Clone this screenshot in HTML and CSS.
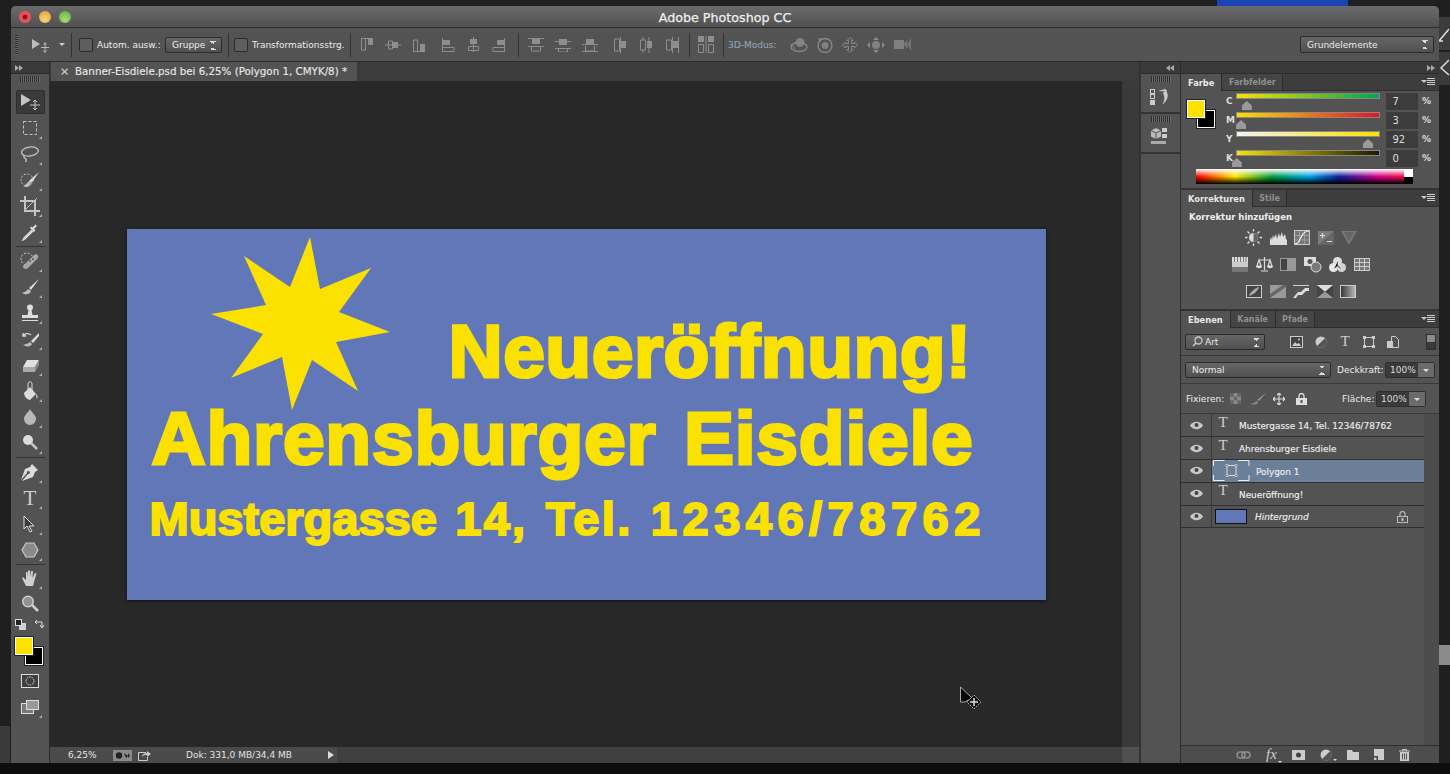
FILE: index.html
```html
<!DOCTYPE html>
<html>
<head>
<meta charset="utf-8">
<title>Adobe Photoshop CC</title>
<link rel="stylesheet" href="styles.css">
</head>
<body>
<!-- bits of the desktop behind the window -->
<div class="desk-blue"></div>
<div class="desk-right one"><svg width="10" height="30" viewBox="0 0 10 30"><path d="M0 24L10 12M0 24h4" fill="none" stroke="#ddd" stroke-width="1.5"/></svg></div>
<div class="desk-right two"><svg width="10" height="30" viewBox="0 0 10 30"><path d="M10 8L2 16l8 7" fill="none" stroke="#ddd" stroke-width="1.5"/></svg></div>
<div class="desk-right three"></div>
<div class="desk-left"></div>
<div class="desk-bottom"></div>

<div class="window">
  <div class="titlebar">
    <div class="lights"><i class="red"></i><i class="yellow"></i><i class="green"></i></div>
    <span class="title">Adobe Photoshop CC</span>
  </div>

  <div class="optionsbar">
    <div class="grip-v"></div>
    <svg class="opt-move" width="20" height="16" viewBox="0 0 20 16"><path d="M1 2l8 5-8 5z" fill="#bdbdbd"/><path d="M14 6v9M10 10.500h8M12.500 7.500l1.500-2 1.500 2M12.500 13.500l1.500 2 1.500-2" fill="none" stroke="#bbb"/></svg>
    <i class="caret opt-caret"></i>
    <span class="sep first"></span>
    <span class="check"></span>
    <span class="opt-label auto">Autom. ausw.:</span>
    <span class="select gruppe">Gruppe<i class="updown"></i></span>
    <span class="sep s2"></span>
    <span class="check"></span>
    <span class="opt-label trans">Transformationsstrg.</span>
    <span class="sep s3"></span>

    <div class="aligns a1">
      <svg width="14" height="14" viewBox="0 0 14 14"><path d="M1 .5h12M1.500 1v11h4V1" fill="none" stroke="#8e8e8e"/><rect x="8" y="1" width="5" height="6" fill="#8e8e8e"/></svg>
      <svg width="16" height="14" viewBox="0 0 16 14"><path d="M0 7h16M3.500 3v8h4V3z" fill="none" stroke="#8e8e8e"/><rect x="8" y="4" width="5" height="6" fill="#8e8e8e"/></svg>
      <svg width="14" height="14" viewBox="0 0 14 14"><path d="M1 13.500h12M1.500 13V2h4v11" fill="none" stroke="#8e8e8e"/><rect x="8" y="6" width="5" height="7" fill="#8e8e8e"/></svg>
      <svg class="wide" width="13" height="14" viewBox="0 0 13 14"><path d="M.5 0v14M1 9.500h11v4H1" fill="none" stroke="#8e8e8e"/><rect x="1" y="2" width="7" height="5" fill="#8e8e8e"/></svg>
      <svg width="15" height="15" viewBox="0 0 15 15"><path d="M7.500 0v15M2.500 9.500h10v4h-10z" fill="none" stroke="#8e8e8e"/><rect x="4" y="2" width="7" height="5" fill="#8e8e8e"/></svg>
      <svg class="last" width="13" height="14" viewBox="0 0 13 14"><path d="M12.500 0v14M12 9.500H1v4h11" fill="none" stroke="#8e8e8e"/><rect x="5" y="2" width="7" height="5" fill="#8e8e8e"/></svg>
    </div>
    <span class="sep s4"></span>
    <div class="aligns a2">
      <svg width="16" height="14" viewBox="0 0 16 14"><path d="M0 .5h16M0 8.500h16M3.500 9v4h9V9" fill="none" stroke="#8e8e8e"/><rect x="4" y="1" width="8" height="5" fill="#8e8e8e"/></svg>
      <svg width="16" height="14" viewBox="0 0 16 14"><path d="M0 3.500h16M0 10.500h16M3.500 11v3h9v-3" fill="none" stroke="#8e8e8e"/><rect x="4" y="1" width="8" height="6" fill="#8e8e8e"/></svg>
      <svg width="16" height="14" viewBox="0 0 16 14"><path d="M0 6.500h16M0 13.500h16M3.500 8v5h9V8" fill="none" stroke="#8e8e8e"/><rect x="4" y="1" width="8" height="5" fill="#8e8e8e"/></svg>
      <svg class="wide" width="13" height="16" viewBox="0 0 13 16"><path d="M.5 2h5v12h-5zM6.500 0v16" fill="none" stroke="#8e8e8e"/><rect x="7" y="4" width="5" height="7" fill="#8e8e8e"/></svg>
      <svg class="wide2" width="13" height="16" viewBox="0 0 13 16"><path d="M.5 3h5v10h-5zM3 0v3M3 13v3M9 0v16" fill="none" stroke="#8e8e8e"/><rect x="7" y="4" width="5" height="7" fill="#8e8e8e"/></svg>
      <svg class="wide2" width="13" height="16" viewBox="0 0 13 16"><path d="M.5 3h5v10h-5zM6.500 0v16M12.500 0v16" fill="none" stroke="#8e8e8e"/><rect x="7" y="4" width="5" height="7" fill="#8e8e8e"/></svg>
    </div>
    <span class="sep s5"></span>
    <svg class="dist" width="16" height="17" viewBox="0 0 16 17"><rect x="0" y="0" width="6" height="6" fill="#8e8e8e"/><rect x="10" y="0" width="6" height="6" fill="#8e8e8e"/><path d="M.5 8.500h5v8h-5zM10.500 8.500h5v8h-5zM8 0v17" fill="none" stroke="#8e8e8e"/></svg>
    <span class="sep s6"></span>
    <span class="mode-label">3D-Modus:</span>
    <div class="modes">
      <svg width="18" height="16" viewBox="0 0 18 16"><circle cx="10" cy="5.500" r="4.500" fill="#808080"/><ellipse cx="9" cy="10" rx="8" ry="4.500" fill="none" stroke="#8a8a8a" stroke-width="1.300"/><path d="M1 7l4 5" stroke="#8a8a8a"/></svg>
      <svg width="16" height="16" viewBox="0 0 16 16"><circle cx="8" cy="8.500" r="7" fill="none" stroke="#8a8a8a" stroke-width="1.300"/><circle cx="8" cy="8.500" r="3.500" fill="#808080"/><path d="M1 1l4 1-2 3z" fill="#8a8a8a"/></svg>
      <svg width="16" height="16" viewBox="0 0 16 16"><path d="M8 .5l3 3H9.500v3h3V5l3 3-3 3V9.500h-3v3H11l-3 3-3-3h1.500v-3h-3V11l-3-3 3-3v1.500h3v-3H5z" fill="none" stroke="#8a8a8a"/></svg>
      <svg width="18" height="16" viewBox="0 0 18 16"><circle cx="9" cy="8" r="4" fill="#808080"/><path d="M9 0l3 3H6zM9 16l3-3H6zM0 8l3-3v6zM18 8l-3-3v6z" fill="#8a8a8a"/></svg>
      <svg width="18" height="12" viewBox="0 0 18 12"><rect x="0" y="1" width="10" height="9" fill="#808080"/><path d="M10 5l3-3v7zM17 0l-3 5.500 3 5.500" fill="#8a8a8a" stroke="#8a8a8a" stroke-width=".5" fill-opacity=".6"/></svg>
    </div>
    <span class="select workspace">Grundelemente<i class="updown"></i></span>
  </div>

  <div class="main">
    <!-- tool column -->
    <div class="tools">
      <div class="collapse-row left"><i class="tri-r"></i><i class="tri-r"></i></div>
      <div class="grip-h"></div>
      <div class="tool active"><svg width="24" height="20" viewBox="0 0 24 20"><path d="M3 2l10 6-10 6z" fill="#c4c4c4"/><path d="M17 8v10M12 13h10M15 10l2-2 2 2M15 16l2 2 2-2" fill="none" stroke="#c4c4c4"/></svg></div>
      <div class="tool more"><svg width="18" height="18" viewBox="0 0 18 18"><rect x="2.500" y="2.500" width="13" height="13" fill="none" stroke="#c4c4c4" stroke-dasharray="3 2"/></svg></div>
      <div class="tool more"><svg width="20" height="18" viewBox="0 0 20 18"><ellipse cx="10" cy="6.500" rx="8.500" ry="4.500" fill="none" stroke="#c4c4c4" stroke-width="1.300" transform="rotate(-8 10 7)"/><path d="M4 10c-1 3 1 3 2 4s0 2-.5 3" fill="none" stroke="#c4c4c4" stroke-width="1.300"/></svg></div>
      <div class="tool more"><svg width="20" height="18" viewBox="0 0 20 18"><circle cx="7" cy="9" r="6" fill="none" stroke="#c4c4c4" stroke-dasharray="2 1.500"/><path d="M19 1l-8 7-2 2 2 2 2-2z" fill="#dcdcdc"/><path d="M9 10l-3 3c-1 1-2 2-3 2 3 2 7 1 8-3z" fill="#bdbdbd"/></svg></div>
      <div class="tool more"><svg width="20" height="20" viewBox="0 0 20 20"><path d="M5 0v15h15M0 5h15v15" fill="none" stroke="#c4c4c4" stroke-width="2"/><path d="M17 2L5 14" stroke="#c4c4c4"/></svg></div>
      <div class="tool more"><svg width="18" height="18" viewBox="0 0 18 18"><path d="M11 7L3 15l-1 2 2-1 8-8" fill="none" stroke="#dcdcdc" stroke-width="1.300"/><path d="M9 5l4 4 1.500-1.500L13 6l3-3-1.500-1.500-3 3-1-1z" fill="#dcdcdc"/></svg></div>
      <div class="divider"></div>
      <div class="tool more"><svg width="20" height="18" viewBox="0 0 20 18"><circle cx="7" cy="7" r="6" fill="none" stroke="#c4c4c4" stroke-dasharray="2 1.500"/><path d="M3 14L14 3c2-2 5 0 4 3L8 16c-2 2-6 0-5-2z" fill="#a8a8a8"/><circle cx="10" cy="9" r="1" fill="#555"/><circle cx="13" cy="7" r="1" fill="#555"/></svg></div>
      <div class="tool more"><svg width="20" height="18" viewBox="0 0 20 18"><path d="M19 1L9 10l2 2z" fill="#dcdcdc"/><path d="M8 11c-2 3-4 3-6 4 3 2 8 2 9-2z" fill="#bdbdbd"/></svg></div>
      <div class="tool more"><svg width="20" height="18" viewBox="0 0 20 18"><circle cx="10" cy="3.500" r="3" fill="#dcdcdc"/><path d="M8.500 6h3l1 5H18v3H2v-3h5.500z" fill="#dcdcdc"/><path d="M2 16.500h16" stroke="#dcdcdc"/></svg></div>
      <div class="tool more"><svg width="20" height="18" viewBox="0 0 20 18"><path d="M19 3l-8 8 2 2 6-7z" fill="#dcdcdc"/><path d="M10 12c-2 2-5 2-7 3 3 2 8 2 9-1z" fill="#bdbdbd"/><path d="M3 6c2-3 6-3 8-1M3 3v3h3" fill="none" stroke="#dcdcdc" stroke-width="1.300"/></svg></div>
      <div class="tool more"><svg width="20" height="16" viewBox="0 0 20 16"><path d="M7 3h12l-4 7H3z" fill="#e0e0e0"/><path d="M3 10h12v5H3z" fill="#a8a8a8"/><path d="M15 10l4-7v5l-4 7z" fill="#8a8a8a"/></svg></div>
      <div class="tool more"><svg width="18" height="20" viewBox="0 0 18 20"><path d="M3 12l6-6 6 7-6 6c-3 0-6-4-6-7z" fill="#dcdcdc"/><path d="M7 10V3c0-3 4-3 4 0v7" fill="none" stroke="#dcdcdc"/><path d="M15 13c2 1 2 4 1 5-1-1-1-3-1-5z" fill="#bdbdbd"/></svg></div>
      <div class="tool more"><svg width="16" height="18" viewBox="0 0 16 18"><path d="M8 1c2 4 6 6 6 10a6 6 0 0 1-12 0C2 7 6 5 8 1z" fill="#b8b8b8"/></svg></div>
      <div class="tool more"><svg width="18" height="18" viewBox="0 0 18 18"><circle cx="7" cy="6" r="5" fill="#dcdcdc"/><path d="M10 9l6 6" stroke="#c4c4c4" stroke-width="2.500"/></svg></div>
      <div class="divider"></div>
      <div class="tool more"><svg width="18" height="18" viewBox="0 0 18 18"><path d="M11 1l6 6-3 2-2 5-11 4 6-7a1.500 1.500 0 1 0-1-1l-6 7 4-11 5-2z" fill="#dcdcdc"/></svg></div>
      <div class="tool more"><span class="t-glyph">T</span></div>
      <div class="tool more"><svg width="16" height="18" viewBox="0 0 16 18"><path d="M2 1v13l3-3 3 6 2-1-3-5h5z" fill="#3b3b3b" stroke="#dcdcdc"/></svg></div>
      <div class="tool more"><svg width="18" height="16" viewBox="0 0 18 16"><path d="M5 1h8l4 7-4 7H5L1 8z" fill="#8a8a8a" stroke="#c8c8c8" stroke-width="1.200"/></svg></div>
      <div class="divider tight"></div>
      <div class="tool more"><svg width="18" height="18" viewBox="0 0 18 18"><path d="M5 17L1 9l1-1 3 3V3h1.500l.5 5V1.500h2L9 8l1-6h2l-.5 7 2.500-5 1.500.5L13 13l-1 4z" fill="#cfcfcf"/></svg></div>
      <div class="tool"><svg width="18" height="18" viewBox="0 0 18 18"><circle cx="7" cy="6.500" r="5.200" fill="#909090" stroke="#cfcfcf" stroke-width="1.500"/><path d="M11 10l6 6" stroke="#cfcfcf" stroke-width="2.500"/></svg></div>
      <div class="colorswitch">
        <svg width="11" height="11" viewBox="0 0 11 11"><rect x="4" y="4" width="7" height="7" fill="#cfcfcf"/><rect x=".5" y=".5" width="6" height="6" fill="#222" stroke="#ddd"/></svg>
        <svg width="11" height="11" viewBox="0 0 11 11"><path d="M1 3h7v5M6 6l2 3 2-3M3 1L1 3l2 2" fill="none" stroke="#ddd"/></svg>
      </div>
      <div class="swatches tool-swatches"><i class="bg"></i><i class="fg"></i></div>
      <div class="tool qmask"><svg width="18" height="14" viewBox="0 0 18 14"><rect width="18" height="14" fill="#dcdcdc"/><rect x="1" y="1" width="16" height="12" fill="#3f3f3f"/><circle cx="9" cy="7" r="4" fill="none" stroke="#ddd" stroke-dasharray="1.500 1"/></svg></div>
      <div class="tool more screen"><svg width="18" height="14" viewBox="0 0 18 14"><rect x=".5" y="3.500" width="12" height="10" fill="#777" stroke="#ddd"/><rect x="5.500" y=".5" width="12" height="9" fill="#999" stroke="#ddd"/></svg></div>
    </div>

    <!-- document -->
    <div class="doc">
      <div class="tabrow">
        <div class="doctab"><span class="tab-x">×</span>Banner-Eisdiele.psd bei 6,25% (Polygon 1, CMYK/8) *</div>
      </div>
      <div class="docbody">
        <div class="canvas">
          <div class="banner">
            <svg class="star" width="919" height="371" viewBox="127 229 919 371"><polygon fill="#fae100" points="310,237 320,289 371,268 339,312 390,332 336,342 358,391 312,360 292,410 282,357 231,378 263,334 211,314 266,305 244,256 290,287"/></svg>
            <div class="art neu">Neueröffnung!</div>
            <div class="art ahr">Ahrensburger Eisdiele</div>
            <div class="art mus"><span class="tight">Mustergasse</span> 14, Tel. <span class="digits">12346/78762</span></div>
          </div>
          <svg class="cursor" width="30" height="28" viewBox="0 0 30 28"><path d="M1.500 1v15H6l7-4z" fill="#000" stroke="#aaa"/><path d="M15 9l7 7-7 7-7-7z" fill="#111" stroke="#aaa" stroke-dasharray="2 1"/><path d="M15 12v8M11 16h8" stroke="#ddd" stroke-width="1.500"/></svg>
        </div>
        <div class="vscroll"></div>
      </div>
      <div class="statusrow">
        <div class="status">
          <span class="zoomval">6,25%</span>
          <svg class="st-a" width="19" height="11" viewBox="0 0 19 11"><rect width="19" height="11" fill="#8a8a8a"/><circle cx="6" cy="5.500" r="3.200" fill="#222"/><path d="M11 3l4 3-2 2zM15 3l2 3-2 2" fill="#222"/></svg>
          <svg class="st-b" width="13" height="11" viewBox="0 0 13 11"><path d="M8 2.500H.5v8h9V7" fill="none" stroke="#ccc"/><path d="M4 7c0-3 3-4 5-4V1l4 3-4 3V5C7 5 5 5 4 7z" fill="#ccc"/></svg>
          <span class="docsize">Dok: 331,0 MB/34,4 MB</span>
          <i class="st-arrow"></i>
        </div>
        <div class="hscroll"></div>
        <div class="corner"></div>
      </div>
    </div>

    <!-- icon dock -->
    <div class="dock">
      <div class="collapse-row dockhead"><i class="tri-l"></i><i class="tri-l"></i></div>
      <div class="dockgroup">
        <div class="grip-h"></div>
        <svg width="24" height="17" viewBox="0 0 24 17"><rect x="1.500" y="1.500" width="4" height="4" fill="none" stroke="#ccc"/><rect x="1.500" y="6.500" width="4" height="4" fill="none" stroke="#ccc"/><rect x="1" y="12" width="5" height="5" fill="#ccc"/><path d="M10 3h8l-2-2M17 3c3 5 1 9-3 13 2-4 2-9 0-11z" fill="#ccc" stroke="#ccc" stroke-width=".5"/></svg>
      </div>
      <div class="dockgroup">
        <div class="grip-h"></div>
        <svg width="20" height="17" viewBox="0 0 20 17"><path d="M5 0l5 2.500v6L5 11 0 8.500v-6z" fill="#bbb"/><path d="M5 5v6M0 2.500l5 2.500 5-2.500" stroke="#555" fill="none"/><rect x="11" y="0" width="5" height="4" fill="#ccc"/><rect x="11" y="6" width="5" height="4" fill="#ccc"/><rect x="0" y="13" width="15" height="3" fill="#aaa"/></svg>
      </div>
    </div>

    <!-- panels -->
    <div class="panels">
      <div class="collapse-row panelhead"><i class="tri-r"></i><i class="tri-r"></i></div>

      <section class="group color">
        <div class="tabs"><span class="tab on">Farbe</span><span class="tab">Farbfelder</span><i class="menu"></i></div>
        <div class="color-body">
          <div class="swatches panel-swatches"><i class="bg"></i><i class="fg"></i></div>
          <div class="sliders">
            <div class="slider"><b>C</b><span class="track"><i class="fill c"></i><i class="thumb" style="left:7%"></i></span><span class="val">7</span><b class="pct">%</b></div>
            <div class="slider"><b>M</b><span class="track"><i class="fill m"></i><i class="thumb" style="left:3%"></i></span><span class="val">3</span><b class="pct">%</b></div>
            <div class="slider"><b>Y</b><span class="track"><i class="fill y"></i><i class="thumb" style="left:92%"></i></span><span class="val">92</span><b class="pct">%</b></div>
            <div class="slider"><b>K</b><span class="track"><i class="fill k"></i><i class="thumb" style="left:0%"></i></span><span class="val">0</span><b class="pct">%</b></div>
          </div>
        </div>
        <div class="spectrum"><span class="bw"></span></div>
      </section>

      <section class="group adjust">
        <div class="tabs"><span class="tab on">Korrekturen</span><span class="tab">Stile</span><i class="menu"></i></div>
        <div class="adj-title">Korrektur hinzufügen</div>
        <div class="adj-row">
          <svg width="17" height="17" viewBox="0 0 17 17"><circle cx="8.500" cy="8.500" r="4.500" fill="#ddd"/><path d="M8.500 4a4.500 4.500 0 0 1 0 9z" fill="#666"/><path d="M8.500 0v2.500M8.500 14.500V17M0 8.500h2.500M14.500 8.500H17M2.500 2.500l2 2M12.500 12.500l2 2M2.500 14.500l2-2M12.500 4.500l2-2" stroke="#ddd" stroke-width="1.300"/></svg>
          <svg width="17" height="14" viewBox="0 0 17 14"><path d="M0 14V9l1-3 1 3 1-5 1 3 2-4 1 5 2-6 1 4 2-5 1 5 2-3 1 5 1 1v5z" fill="#ddd"/></svg>
          <svg width="16" height="15" viewBox="0 0 16 15"><rect x=".5" y=".5" width="15" height="14" fill="#777" stroke="#ccc"/><path d="M5.500 1v13M10.500 1v13M1 5.500h14M1 10h14" stroke="#aaa" stroke-width=".7"/><path d="M1 14c6 0 5-13 14-13" fill="none" stroke="#eee" stroke-width="1.200"/></svg>
          <svg width="16" height="14" viewBox="0 0 16 14"><rect width="16" height="14" fill="#7c7c7c"/><path d="M0 14L16 0v14z" fill="#666"/><path d="M2 4.500h5M4.500 2v5M9 10.500h5" stroke="#ddd" stroke-width="1.200"/></svg>
          <svg width="16" height="14" viewBox="0 0 16 14"><path d="M0 0h16L8 14z" fill="#777"/><path d="M3 1h10L8 10z" fill="#666"/></svg>
        </div>
        <div class="adj-row">
          <svg width="16" height="15" viewBox="0 0 16 15"><rect width="16" height="5" fill="#ddd"/><path d="M2.500 0v5M5.500 0v5M8.500 0v5M11.500 0v5M14 0v5" stroke="#777"/><rect y="5" width="16" height="5" fill="#ccc"/><rect y="10" width="16" height="5" fill="#777"/></svg>
          <svg width="17" height="15" viewBox="0 0 17 15"><path d="M8.500 0v13M3 3h11M1 9l2-6 2 6zM12 9l2-6 2 6zM5 14h7" fill="none" stroke="#ddd" stroke-width="1.200"/><path d="M0 9h6c0 3-6 3-6 0zM11 9h6c0 3-6 3-6 0z" fill="#ddd"/></svg>
          <svg width="16" height="13" viewBox="0 0 16 13"><rect width="16" height="13" fill="#999"/><rect x="1" y="1" width="6" height="11" fill="#444"/></svg>
          <svg width="18" height="17" viewBox="0 0 18 17"><rect y="1" width="12" height="9" fill="#ddd"/><circle cx="6" cy="5.500" r="2.500" fill="#555"/><circle cx="12" cy="11" r="5" fill="#777" stroke="#ddd"/></svg>
          <svg width="17" height="15" viewBox="0 0 17 15"><circle cx="8.500" cy="4.500" r="4.500" fill="#ddd"/><circle cx="4.500" cy="10.500" r="4.500" fill="#e8e8e8"/><circle cx="12.500" cy="10.500" r="4.500" fill="#d2d2d2"/><path d="M8.500 5v4l-3 2M8.500 9l3 2" stroke="#555"/></svg>
          <svg width="16" height="13" viewBox="0 0 16 13"><rect x=".5" y=".5" width="15" height="12" fill="#777" stroke="#ccc"/><path d="M5.500 1v11M10.500 1v11M1 4.500h14M1 8.500h14" stroke="#ccc"/></svg>
        </div>
        <div class="adj-row">
          <svg width="16" height="13" viewBox="0 0 16 13"><rect x=".5" y=".5" width="15" height="12" fill="#444" stroke="#ccc"/><path d="M3 11c1-4 6-8 10-9-1 4-6 8-10 9z" fill="#aaa"/></svg>
          <svg width="16" height="13" viewBox="0 0 16 13"><rect width="16" height="13" fill="#999"/><path d="M0 13L16 2V0H13L0 9z" fill="#666"/></svg>
          <svg width="16" height="13" viewBox="0 0 16 13"><rect width="16" height="13" fill="#555"/><path d="M0 13l5-6h3l4-4h4v3h-3l-4 4H5l-2 3z" fill="#ddd"/><path d="M0 0h16v1H0z" fill="#ccc"/></svg>
          <svg width="16" height="13" viewBox="0 0 16 13"><rect width="16" height="13" fill="#999"/><path d="M0 0l8 6.500L0 13zM16 0L8 6.500 16 13z" fill="#444"/><path d="M0 0h16L8 6.500z" fill="#ddd"/></svg>
          <svg width="16" height="13" viewBox="0 0 16 13"><defs><linearGradient id="gradmap"><stop offset="0" stop-color="#333"/><stop offset="1" stop-color="#bbb"/></linearGradient></defs><rect x=".5" y=".5" width="15" height="12" fill="url(#gradmap)" stroke="#ccc"/></svg>
        </div>
      </section>

      <section class="group layers">
        <div class="tabs"><span class="tab on">Ebenen</span><span class="tab">Kanäle</span><span class="tab">Pfade</span><i class="menu"></i></div>
        <div class="layer-bar filter">
          <span class="select art-sel"><svg width="11" height="11" viewBox="0 0 11 11"><circle cx="6.500" cy="4.500" r="3.500" fill="none" stroke="#ccc" stroke-width="1.300"/><path d="M4 7L1 10" stroke="#ccc" stroke-width="1.500"/></svg>Art<i class="updown"></i></span>
          <div class="filter-icons">
            <svg width="13" height="12" viewBox="0 0 13 12"><rect x=".5" y=".5" width="12" height="11" fill="#444" stroke="#ccc"/><path d="M2 10l3-4 2 2 2-1 2 3z" fill="#ccc"/><circle cx="9" cy="3.500" r="1" fill="#ccc"/></svg>
            <svg width="12" height="12" viewBox="0 0 12 12"><circle cx="6" cy="6" r="5.500" fill="#ccc"/><path d="M10 2.200A5.500 5.500 0 0 1 2 10z" fill="#555"/></svg>
            <span class="t-glyph small">T</span>
            <svg width="12" height="12" viewBox="0 0 12 12"><rect x="1.500" y="1.500" width="9" height="9" fill="none" stroke="#ccc"/><path d="M0 0h3v3H0zM9 0h3v3H9zM0 9h3v3H0zM9 9h3v3H9z" fill="#ccc"/></svg>
            <svg width="12" height="12" viewBox="0 0 12 12"><path d="M4.500.5h4l3 3v8h-7z" fill="none" stroke="#ccc"/><rect x="0" y="5" width="6" height="7" fill="#ccc"/></svg>
          </div>
          <span class="toggle"><i></i></span>
        </div>
        <div class="layer-bar blend">
          <span class="select normal">Normal<i class="updown"></i></span>
          <span class="field-label">Deckkraft:</span>
          <span class="num">100%<i class="numbtn"></i></span>
        </div>
        <div class="layer-bar lock">
          <span class="field-label fix">Fixieren:</span>
          <svg class="lk checker" width="11" height="11" viewBox="0 0 11 11"><rect width="11" height="11" fill="#8a8a8a"/><path d="M0 0h3.700v3.700H0zM7.300 0H11v3.700H7.300zM3.700 3.700h3.600v3.600H3.700zM0 7.300h3.700V11H0zM7.300 7.300H11V11H7.300z" fill="#666"/></svg>
          <svg class="lk brush" width="16" height="12" viewBox="0 0 16 12"><path d="M16 0L7 7l2 1z" fill="#999"/><path d="M6 8c-1 2-3 2-6 3 3 1 8 1 8-2z" fill="#888"/></svg>
          <svg class="lk moved" width="12" height="12" viewBox="0 0 12 12"><path d="M6 0v12M0 6h12M4 2l2-2 2 2M4 10l2 2 2-2M2 4L0 6l2 2M10 4l2 2-2 2" fill="none" stroke="#ddd" stroke-width="1.100"/></svg>
          <svg class="lk" width="11" height="12" viewBox="0 0 11 12"><path d="M3 5V3a2.500 2.500 0 0 1 5 0v2" fill="none" stroke="#ddd" stroke-width="1.300"/><rect y="5" width="11" height="7" fill="#ddd"/><rect x="4.500" y="7" width="2" height="3" fill="#555"/></svg>
          <span class="field-label area">Fläche:</span>
          <span class="num">100%<i class="numbtn"></i></span>
        </div>
        <div class="layer-body">
          <div class="layer-list">
            <div class="layer"><span class="eye"><svg width="13" height="9" viewBox="0 0 13 9"><path d="M0 4.500C3-.5 10-.5 13 4.500 10 9.500 3 9.500 0 4.500z" fill="#c8c8c8"/><circle cx="6.500" cy="4" r="2" fill="#444"/></svg></span><span class="thumb-t t-glyph small">T</span><span class="lname">Mustergasse 14, Tel. 12346/78762</span></div>
            <div class="layer"><span class="eye"><svg width="13" height="9" viewBox="0 0 13 9"><path d="M0 4.500C3-.5 10-.5 13 4.500 10 9.500 3 9.500 0 4.500z" fill="#c8c8c8"/><circle cx="6.500" cy="4" r="2" fill="#444"/></svg></span><span class="thumb-t t-glyph small">T</span><span class="lname">Ahrensburger Eisdiele</span></div>
            <div class="layer sel short"><span class="eye"><svg width="13" height="9" viewBox="0 0 13 9"><path d="M0 4.500C3-.5 10-.5 13 4.500 10 9.500 3 9.500 0 4.500z" fill="#c8c8c8"/><circle cx="6.500" cy="4" r="2" fill="#444"/></svg></span>
              <svg class="shape-thumb" width="37" height="21" viewBox="0 0 37 21"><path d="M.5 6V.5h11M25 .5h11V6M.5 15v5.500h11M25 20.500h11V15" fill="none" stroke="#eee"/><path d="M14 5.500h9v10h-9z" fill="none" stroke="#ddd"/><path d="M13 4.500h2v2h-2zM22 4.500h2v2h-2zM13 14.500h2v2h-2zM22 14.500h2v2h-2z" fill="#556" stroke="#ddd" stroke-width=".7"/></svg>
              <span class="lname poly">Polygon 1</span></div>
            <div class="layer"><span class="eye"><svg width="13" height="9" viewBox="0 0 13 9"><path d="M0 4.500C3-.5 10-.5 13 4.500 10 9.500 3 9.500 0 4.500z" fill="#c8c8c8"/><circle cx="6.500" cy="4" r="2" fill="#444"/></svg></span><span class="thumb-t t-glyph small">T</span><span class="lname">Neueröffnung!</span></div>
            <div class="layer short"><span class="eye"><svg width="13" height="9" viewBox="0 0 13 9"><path d="M0 4.500C3-.5 10-.5 13 4.500 10 9.500 3 9.500 0 4.500z" fill="#c8c8c8"/><circle cx="6.500" cy="4" r="2" fill="#444"/></svg></span><span class="bg-thumb"></span><span class="lname bgname">Hintergrund</span>
              <svg class="layer-lock" width="11" height="12" viewBox="0 0 11 12"><path d="M3 5V3a2.500 2.500 0 0 1 5 0v2" fill="none" stroke="#bbb" stroke-width="1.200"/><rect x=".5" y="5.500" width="10" height="6" fill="none" stroke="#bbb"/><rect x="4.500" y="7" width="2" height="3" fill="#bbb"/></svg></div>
          </div>
          <div class="layer-scroll"></div>
        </div>
        <div class="layer-foot">
          <svg width="15" height="8" viewBox="0 0 15 8"><rect x="1" y="1" width="8" height="6" rx="3" fill="none" stroke="#8e8e8e" stroke-width="1.500"/><rect x="6" y="1" width="8" height="6" rx="3" fill="none" stroke="#8e8e8e" stroke-width="1.500"/></svg>
          <span class="fx">fx<i class="mini"></i></span>
          <svg width="13" height="10" viewBox="0 0 13 10"><rect width="13" height="10" fill="#ccc"/><circle cx="6.500" cy="5" r="2.500" fill="#444"/></svg>
          <span class="adj-foot"><svg width="12" height="12" viewBox="0 0 12 12"><circle cx="6" cy="6" r="5.500" fill="#ccc"/><path d="M10 2.200A5.500 5.500 0 0 1 2 10z" fill="#555"/></svg><i class="mini"></i></span>
          <svg width="12" height="10" viewBox="0 0 12 10"><path d="M0 0h5l1 2h6v8H0z" fill="#ccc"/></svg>
          <svg width="10" height="11" viewBox="0 0 10 11"><path d="M0 0h10v11H0z" fill="#ccc"/><path d="M0 7h4v4H2.500V8.500H0z" fill="#444"/></svg>
          <svg width="11" height="12" viewBox="0 0 11 12"><path d="M0 2h11M3.500 2V.5h4V2" fill="none" stroke="#ccc"/><path d="M1 3h9v9H1z" fill="#ccc"/><path d="M3.500 4.500v6M5.500 4.500v6M7.500 4.500v6" stroke="#555"/></svg>
        </div>
      </section>
    </div>
  </div>
</div>
</body>
</html>
```

FILE: styles.css
```css
* {
	box-sizing: border-box;
}
html, body {
	margin: 0;
	padding: 0;
	height: 100%;
	overflow: hidden;
}
body {
	position: relative;
	background: #1f1f1f;
	font-family: "DejaVu Sans", sans-serif;
	font-size: 9px;
	color: #dcdcdc;
}
i {
	display: inline-block;
	font-style: normal;
}
svg {
	display: block;
	flex: none;
}

/* desktop behind the window */
.desk-blue {
	position: absolute;
	left: 1217px;
	top: 0;
	width: 131px;
	height: 6px;
	background: #1c44b4;
}
.desk-right {
	position: absolute;
	left: 1439px;
	width: 11px;
	background: #3c3c3c;
}
.desk-right.one { top: 17px; height: 33px; }
.desk-right.two { top: 52px; height: 33px; }
.desk-right.three { top: 645px; height: 20px; background: #8a8a8a; }
.desk-left {
	position: absolute;
	left: 0;
	top: 726px;
	width: 10px;
	height: 37px;
	background: #3a3a3a;
}
.desk-bottom {
	position: absolute;
	left: 0;
	top: 763px;
	width: 1450px;
	height: 11px;
	background: #0d0d0d;
}

.window {
	width: 1428px;
	height: 757px;
	margin: 6px 0 0 11px;
	display: flex;
	flex-direction: column;
	background: #535353;
	border-radius: 5px 5px 0 0;
	overflow: hidden;
	position: relative;
}

/* title bar */
.titlebar {
	height: 22px;
	flex: none;
	display: flex;
	align-items: center;
	justify-content: center;
	padding-top: 1px;
	position: relative;
	background: linear-gradient(#6b6b6b, #515151);
	border-bottom: 1px solid #2c2c2c;
}
.title {
	font-size: 12.7px;
	font-weight: normal;
	color: #eee;
	-webkit-text-stroke: .25px #eee;
}
.lights {
	position: absolute;
	left: 8px;
	top: 5px;
	display: flex;
	gap: 8px;
}
.lights i {
	width: 12px;
	height: 12px;
	border-radius: 50%;
}
.lights .red { background: radial-gradient(circle at 50% 50%, #7a0010 18%, #e8404c 30%, #f06a70 100%); }
.lights .yellow { background: radial-gradient(circle at 50% 70%, #ffd27a, #e09a2c); }
.lights .green { background: radial-gradient(circle at 50% 70%, #a8dc7a, #5ea83c); }

/* options bar */
.optionsbar {
	height: 34px;
	flex: none;
	display: flex;
	align-items: center;
	padding-left: 4px;
	background: #535353;
	border-bottom: 1px solid #2c2c2c;
}
.grip-v {
	width: 3px;
	height: 20px;
	background: repeating-linear-gradient(#2e2e2e 0 1px, #666 1px 2px);
}
.opt-move { margin-left: 13px; }
.opt-caret { margin-left: 8px; }
.caret {
	width: 0;
	height: 0;
	border-left: 3px solid transparent;
	border-right: 3px solid transparent;
	border-top: 3px solid #ccc;
}
.sep {
	width: 1px;
	height: 24px;
	background: #333;
	flex: none;
}
.sep.first { margin-left: 6px; margin-right: 7px; }
.sep.s2 { margin: 0 5px 0 6px; }
.sep.s3 { margin: 0 9px 0 5px; }
.sep.s4 { margin: 0 9px 0 13px; }
.sep.s5 { margin: 0 8px 0 10px; }
.sep.s6 { margin: 0 4px 0 9px; }
.check {
	width: 14px;
	height: 14px;
	border-radius: 2px;
	background: #5e5e5e;
	border: 1px solid #2b2b2b;
	flex: none;
}
.opt-label {
	margin-left: 4px;
	white-space: nowrap;
	color: #ececec;
}
.opt-label.auto { width: 68px; }
.opt-label.trans { width: 93px; }
.select {
	display: flex;
	align-items: center;
	height: 16px;
	padding-left: 6px;
	border: 1px solid #2b2b2b;
	border-radius: 2px;
	background: linear-gradient(#666, #505050);
	color: #ececec;
	position: relative;
	white-space: nowrap;
}
.updown {
	position: absolute;
	right: 5px;
	top: 3px;
	width: 6px;
	height: 9px;
	background:
		linear-gradient(to top right, transparent 50%, #ddd 50%) 0 0/3px 3px no-repeat,
		linear-gradient(to top left, transparent 50%, #ddd 50%) 3px 0/3px 3px no-repeat,
		linear-gradient(to bottom right, transparent 50%, #ddd 50%) 0 6px/3px 3px no-repeat,
		linear-gradient(to bottom left, transparent 50%, #ddd 50%) 3px 6px/3px 3px no-repeat;
}
.select.gruppe { width: 57px; }
.select.workspace {
	width: 134px;
	height: 17px;
	margin-left: auto;
	margin-right: 5px;
}
.aligns {
	display: flex;
	align-items: center;
	gap: 11px;
}
.aligns .wide { margin-left: 5px; }
.aligns .wide2 { margin-left: 2px; }
.mode-label {
	width: 49px;
	color: #8fa0b4;
	white-space: nowrap;
	-webkit-text-stroke: .15px #8fa0b4;
}
.modes {
	display: flex;
	align-items: center;
	margin-left: 13px;
	gap: 9px;
}

/* main area */
.main {
	flex: 1;
	display: flex;
	min-height: 0;
}
.collapse-row {
	height: 12px;
	flex: none;
	display: flex;
	align-items: center;
	gap: 0;
	background: #3a3a3a;
	border-bottom: 1px solid #2c2c2c;
}
.tri-r, .tri-l {
	width: 0;
	height: 0;
	border-top: 3px solid transparent;
	border-bottom: 3px solid transparent;
}
.tri-r { border-left: 4px solid #aaa; }
.tri-l { border-right: 4px solid #aaa; }
.grip-h {
	width: 20px;
	height: 6px;
	background: repeating-linear-gradient(90deg, #2e2e2e 0 1px, #6a6a6a 1px 2px);
	flex: none;
}

/* tools */
.tools {
	width: 39px;
	flex: none;
	display: flex;
	flex-direction: column;
	align-items: center;
	background: #535353;
	border-right: 1px solid #2c2c2c;
}
.collapse-row.left {
	width: 100%;
	padding-left: 4px;
}
.tools .grip-h { margin-top: 2px; margin-bottom: 8px; }
.tool {
	width: 29px;
	height: 26px;
	flex: none;
	display: flex;
	align-items: center;
	justify-content: center;
	position: relative;
}
.tool.active {
	height: 24px;
	margin-bottom: 1px;
	background: #3a3a3a;
	border: 1px solid #2f2f2f;
	border-radius: 2px;
}
.tool.more::after {
	content: "";
	position: absolute;
	right: 3px;
	bottom: 2px;
	border-left: 3px solid transparent;
	border-bottom: 3px solid #b0b0b0;
}
.divider {
	width: 29px;
	height: 1px;
	background: #333;
	flex: none;
	margin: 1px 0;
}
.divider.tight { margin: 1px 0 0; }
.t-glyph {
	font-family: "Liberation Serif", serif;
	font-size: 21px;
	line-height: 1;
	color: #cfcfcf;
}
.t-glyph.small { font-size: 15px; }
.colorswitch {
	width: 30px;
	display: flex;
	justify-content: space-between;
	margin-top: 2px;
	flex: none;
}
.swatches {
	position: relative;
	flex: none;
}
.swatches i {
	position: absolute;
	width: 18px;
	height: 18px;
	border: 1px solid #fff;
	outline: 1px solid #222;
}
.swatches .fg { background: #fae100; left: 0; top: 0; }
.swatches .bg { background: #000; left: 10px; top: 10px; }
.tool-swatches {
	width: 30px;
	height: 29px;
	margin-top: 7px;
}
.tool.qmask { margin-top: 2px; }
.tool.screen { margin-top: 0; }

/* document */
.doc {
	width: 1091px;
	flex: none;
	display: flex;
	flex-direction: column;
	border-right: 2px solid #333;
}
.tabrow {
	height: 19px;
	flex: none;
	background: #3c3c3c;
	padding-left: 1px;
}
.doctab {
	width: 306px;
	height: 19px;
	background: #535353;
	font-size: 10.300px;
	line-height: 19px;
	color: #e6e6e6;
	white-space: nowrap;
	-webkit-text-stroke: .15px #e6e6e6;
}
.tab-x {
	display: inline-block;
	width: 24px;
	padding-left: 9px;
	font-size: 11px;
	color: #ccc;
}
.docbody {
	flex: 1;
	display: flex;
	min-height: 0;
}
.canvas {
	flex: 1;
	position: relative;
	display: flex;
	align-items: center;
	justify-content: center;
	background: #282828;
}
.vscroll {
	width: 17px;
	background: #3a3a3a;
}
.banner {
	width: 919px;
	height: 371px;
	position: relative;
	background: #6277b7;
	box-shadow: 0 1px 3px #111;
}
.star {
	position: absolute;
	left: 0;
	top: 0;
}
.art {
	position: absolute;
	white-space: nowrap;
	font-family: "Liberation Sans", sans-serif;
	font-weight: bold;
	line-height: 1;
	color: #fae100;
	-webkit-text-stroke-color: #fae100;
}
.art.neu {
	left: 322px;
	top: 85px;
	font-size: 75px;
	letter-spacing: .5px;
	-webkit-text-stroke-width: 3px;
}
.art.ahr {
	left: 25px;
	top: 172px;
	font-size: 75px;
	letter-spacing: .75px;
	-webkit-text-stroke-width: 3px;
	word-spacing: 6px;
}
.art.mus {
	left: 23px;
	top: 266px;
	font-size: 47px;
	-webkit-text-stroke-width: 2px;
	letter-spacing: 2.300px;
	word-spacing: 3px;
}
.art.mus .tight { letter-spacing: 0; }
.art.mus .digits { letter-spacing: 5.500px; }
.cursor {
	position: absolute;
	left: 909px;
	top: 605px;
}
.statusrow {
	height: 16px;
	flex: none;
	display: flex;
}
.status {
	width: 287px;
	display: flex;
	align-items: center;
	background: #4a4a4a;
	color: #e4e4e4;
	position: relative;
}
.zoomval { margin-left: 18px; width: 45px; }
.st-b { margin-left: 6px; }
.docsize { margin-left: 35px; white-space: nowrap; }
.st-arrow {
	position: absolute;
	left: 278px;
	top: 4px;
	border-left: 6px solid #ddd;
	border-top: 4px solid transparent;
	border-bottom: 4px solid transparent;
}
.hscroll {
	flex: 1;
	background: #404040;
}
.corner {
	width: 17px;
	background: #505050;
}

/* dock */
.dock {
	width: 40px;
	flex: none;
	display: flex;
	flex-direction: column;
	background: #535353;
	border-right: 1px solid #2c2c2c;
}
.dockhead {
	justify-content: flex-end;
	padding-right: 6px;
}
.dockgroup {
	height: 40px;
	display: flex;
	flex-direction: column;
	align-items: center;
	gap: 6px;
	padding-top: 2px;
	border-bottom: 2px solid #333;
}

/* panels */
.panels {
	width: 258px;
	flex: none;
	display: flex;
	flex-direction: column;
	background: #333;
	gap: 2px;
}
.panelhead {
	justify-content: flex-end;
	padding-right: 4px;
	margin-bottom: -2px;
}
.group {
	background: #535353;
	display: flex;
	flex-direction: column;
	flex: none;
}
.tabs {
	height: 17px;
	flex: none;
	display: flex;
	background: #3d3d3d;
	position: relative;
	border-bottom: 1px solid #2f2f2f;
}
.tab {
	display: flex;
	align-items: center;
	padding: 1px 6.500px 0;
	border-right: 1px solid #2c2c2c;
	color: #8f8f8f;
	font-weight: bold;
	font-size: 8px;
	background: #454545;
}
.tab.on {
	background: #535353;
	color: #e8e8e8;
	height: 17px;
	font-size: 8.300px;
	padding: 1px 7px 0;
}
.menu {
	position: absolute;
	right: 4px;
	top: 4px;
	width: 8px;
	height: 7px;
	background: repeating-linear-gradient(#ccc 0 1px, transparent 1px 2px);
}
.menu::before {
	content: "";
	position: absolute;
	left: -6px;
	top: 2px;
	border-left: 3px solid transparent;
	border-right: 3px solid transparent;
	border-top: 3px solid #ccc;
}

/* colour panel */
.group.color { height: 114px; }
.color-body {
	display: flex;
	padding: 2px 0 0 6px;
	height: 78px;
}
.panel-swatches {
	width: 30px;
	height: 30px;
	margin-top: 7px;
}
.sliders {
	margin-left: 9px;
	width: 205px;
}
.slider {
	height: 19px;
	display: flex;
	position: relative;
}
.slider b {
	width: 10px;
	padding-top: 3px;
	font-size: 9px;
	color: #ddd;
}
.slider b.pct { width: auto; margin-left: 4px; }
.track {
	width: 147px;
	height: 6px;
	display: block;
	position: relative;
	border: 1px solid #888;
}
.fill {
	display: block;
	height: 100%;
}
.fill.c { background: linear-gradient(90deg, #fae100, #00a650); }
.fill.m { background: linear-gradient(90deg, #fae100, #e2122c); }
.fill.y { background: linear-gradient(90deg, #f2f2f2, #fae100); }
.fill.k { background: linear-gradient(90deg, #fae100, #1a1a00); }
.thumb {
	position: absolute;
	top: 7px;
	margin-left: -5px;
	width: 10px;
	height: 9px;
	background: #9a9a9a;
	clip-path: polygon(50% 0, 100% 50%, 100% 100%, 0 100%, 0 50%);
}
.val {
	width: 32px;
	height: 17px;
	margin-left: 6px;
	padding: 3px 0 0 6px;
	background: #3c3c3c;
	font-size: 10px;
	color: #ddd;
}
.spectrum {
	width: 217px;
	height: 15px;
	margin: 0 0 0 15px;
	position: relative;
	background:
		linear-gradient(#ffffff, rgba(255,255,255,0) 50%, rgba(0,0,0,0) 50%, #000),
		linear-gradient(90deg, #ff0000 0, #ffe800 18%, #00a040 35%, #00a8e8 52%, #1020a0 66%, #e0008c 85%, #ed1c24 100%);
}
.bw {
	position: absolute;
	right: 0;
	top: 0;
	width: 9px;
	height: 15px;
	background: linear-gradient(#fff 50%, #000 50%);
}

/* adjustments */
.group.adjust { height: 119px; }
.adj-title {
	padding: 5px 0 0 8px;
	height: 17px;
	font-weight: bold;
	font-size: 8.500px;
	color: #eee;
}
.adj-row {
	height: 27px;
	display: flex;
	align-items: center;
	justify-content: center;
	gap: 7.500px;
	padding-right: 18px;
}

/* layers */
.group.layers { flex: 1; min-height: 0; }
.layer-bar {
	display: flex;
	align-items: center;
	border-bottom: 1px solid #3a3a3a;
	padding-left: 4px;
	flex: none;
}
.filter { height: 28px; }
.blend { height: 28px; }
.lock { height: 30px; padding-left: 5px; }
.art-sel { width: 80px; height: 16px; padding-left: 6px; gap: 2px; }
.filter-icons {
	display: flex;
	align-items: center;
	margin-left: 25px;
	gap: 12px;
}
.filter-icons .t-glyph { width: 12px; text-align: center; }
.toggle {
	margin-left: 27px;
	width: 10px;
	height: 16px;
	background: #3a3a3a;
	border: 1px solid #2f2f2f;
}
.toggle i {
	display: block;
	height: 7px;
	background: #8a8a8a;
}
.select.normal { width: 146px; height: 16px; }
.field-label {
	margin-left: 6px;
	white-space: nowrap;
	color: #ececec;
	width: 44px;
	flex: none;
}
.field-label.fix { margin-left: 0; width: 39px; }
.field-label.area { margin-left: 26px; width: 30px; }
.num {
	margin-left: 4px;
	width: 50px;
	height: 16px;
	display: flex;
	align-items: center;
	padding-left: 4px;
	background: #3a3a3a;
	border: 1px solid #2f2f2f;
	border-radius: 2px;
	font-size: 9px;
	position: relative;
	flex: none;
}
.numbtn {
	position: absolute;
	right: 0;
	top: 0;
	width: 16px;
	height: 14px;
	background: #6a6a6a;
}
.numbtn::after {
	content: "";
	position: absolute;
	left: 5px;
	top: 6px;
	border-left: 3px solid transparent;
	border-right: 3px solid transparent;
	border-top: 3px solid #ddd;
}
.lk { margin-right: 9px; }
.lk.checker { margin-left: 5px; }
.lk.brush { margin-right: 7px; }
.lk.moved { margin-right: 11px; }
.layer-body {
	flex: 1;
	display: flex;
	min-height: 0;
}
.layer-list {
	flex: 1;
}
.layer-scroll {
	width: 15px;
	background: #4c4c4c;
}
.layer {
	height: 23px;
	display: flex;
	align-items: center;
	border-bottom: 1px solid #2f2f2f;
	position: relative;
	font-size: 8.900px;
	color: #eee;
}
.layer.short { height: 22.500px; }
.eye {
	width: 31px;
	height: 100%;
	display: flex;
	align-items: center;
	justify-content: center;
	border-right: 1px solid #3a3a3a;
	background: #535353;
	flex: none;
}
.thumb-t {
	width: 22px;
	text-align: center;
	margin-top: -6px;
}
.lname {
	margin-left: 5px;
	margin-top: 2px;
	white-space: nowrap;
	-webkit-text-stroke: .15px #eee;
}
.layer.sel {
	background: #6b7f99;
}
.shape-thumb { margin-left: 1px; }
.lname.poly { margin-left: 6px; }
.bg-thumb {
	width: 32px;
	height: 15px;
	margin-left: 3px;
	background: #6277b7;
	border: 1px solid #111;
}
.lname.bgname {
	margin-left: 8px;
	font-style: italic;
}
.layer-lock {
	position: absolute;
	left: 216px;
	top: 5px;
}
.layer-foot {
	height: 18px;
	flex: none;
	display: flex;
	align-items: center;
	padding-left: 55px;
	gap: 15px;
	border-top: 1px solid #2f2f2f;
	background: #4d4d4d;
}
.fx {
	font-family: "Liberation Serif", serif;
	font-style: italic;
	font-size: 15px;
	color: #ccc;
	position: relative;
}
.adj-foot { position: relative; }
.mini {
	position: absolute;
	right: -5px;
	bottom: 0;
	border-left: 2px solid transparent;
	border-right: 2px solid transparent;
	border-top: 2px solid #ddd;
}
```
